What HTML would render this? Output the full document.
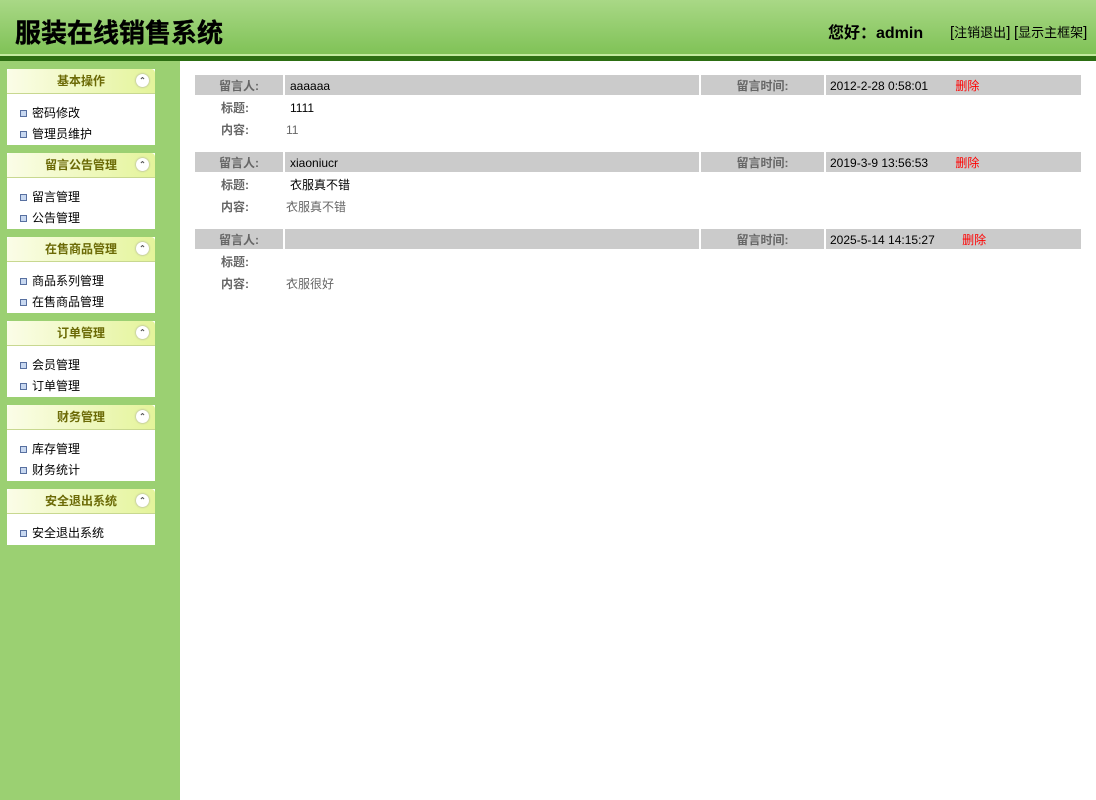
<!DOCTYPE html>
<html><head><meta charset="utf-8"><style>
*{margin:0;padding:0;box-sizing:border-box}
body{width:1096px;height:800px;overflow:hidden;background:#9bd072;font-family:"Liberation Sans","Microsoft YaHei","Noto Sans CJK SC",sans-serif;font-size:12px;position:relative}
#hd{position:absolute;left:0;top:0;width:1096px;height:55px;background:linear-gradient(#a9d886,#7fc256);}
#hd .line{position:absolute;left:0;top:54px;width:100%;height:2px;background:#c2ea9e}
#bar{position:absolute;left:0;top:56px;width:1096px;height:5px;background:#2c6e12}
#title{position:absolute;left:15px;top:15px;font-size:26px;font-weight:bold;color:#000;font-family:"Noto Sans CJK SC",sans-serif;line-height:34px;-webkit-text-stroke:0.4px #000}
#hi{position:absolute;left:828px;top:19px;font-size:16px;font-weight:bold;font-family:"Liberation Sans","Noto Sans CJK SC",sans-serif}
#lk{position:absolute;left:950px;top:22px;font-size:13px;font-family:"Liberation Sans","Noto Sans CJK SC",sans-serif}
#lk b{font-weight:normal;font-size:15px}
#main{position:absolute;left:180px;top:61px;width:916px;height:739px;background:#fff}
.pn{position:absolute;left:7px;width:148px;background:#fff}
.ph{height:25px;background:linear-gradient(90deg,#fbfde8,#e4f49a);border-radius:4px 4px 0 0;border-bottom:1px solid #c8d890;text-align:center;line-height:24px;font-weight:bold;color:#6b6a06;font-size:12px;font-family:"Noto Sans CJK SC",sans-serif;position:relative}
.ph i{position:absolute;right:6px;top:5px;width:13px;height:13px;border-radius:50%;background:#fff;box-shadow:0 0 2px #999;font-style:normal;font-size:8px;line-height:13px;color:#555}
.it{height:21px;line-height:21px;padding-left:25px;position:relative;color:#000;font-family:"Noto Sans CJK SC",sans-serif}
.it:before{content:"";position:absolute;left:13px;top:8px;width:5px;height:5px;border:1px solid #5870a0;background:#c8d8f0}
.row{position:absolute;left:195px;height:20px;width:886px}
.c{position:absolute;top:0;height:20px;background:#cbcbcb;line-height:22px;font-family:"Liberation Sans","Noto Sans CJK SC",sans-serif}
.lab{color:#666;font-weight:bold;text-align:center}
.t{position:absolute;line-height:16px;font-family:"Liberation Sans","Noto Sans CJK SC",sans-serif}
.del{color:#f00}
</style></head><body>
<div id="hd"><div class="line"></div></div><div id="bar"></div>
<div id="title">服装在线销售系统</div>
<div id="hi">您好：admin</div>
<div id="lk"><b>[</b>注销退出<b>]</b> <b>[</b>显示主框架<b>]</b></div>
<div id="main"></div>

<div class="pn" style="top:69px"><div class="ph">基本操作<i>⌃</i></div><div style="padding:8px 0 1px"><div class="it">密码修改</div><div class="it">管理员维护</div></div></div>
<div class="pn" style="top:153px"><div class="ph">留言公告管理<i>⌃</i></div><div style="padding:8px 0 1px"><div class="it">留言管理</div><div class="it">公告管理</div></div></div>
<div class="pn" style="top:237px"><div class="ph">在售商品管理<i>⌃</i></div><div style="padding:8px 0 1px"><div class="it">商品系列管理</div><div class="it">在售商品管理</div></div></div>
<div class="pn" style="top:321px"><div class="ph">订单管理<i>⌃</i></div><div style="padding:8px 0 1px"><div class="it">会员管理</div><div class="it">订单管理</div></div></div>
<div class="pn" style="top:405px"><div class="ph">财务管理<i>⌃</i></div><div style="padding:8px 0 1px"><div class="it">库存管理</div><div class="it">财务统计</div></div></div>
<div class="pn" style="top:489px"><div class="ph">安全退出系统<i>⌃</i></div><div style="padding:8px 0 2px"><div class="it">安全退出系统</div></div></div>

<div class="row" style="top:75px">
<div class="c lab" style="left:0;width:88px">留言人:</div>
<div class="c" style="left:90px;width:414px;padding-left:5px">aaaaaa</div>
<div class="c lab" style="left:506px;width:123px">留言时间:</div>
<div class="c" style="left:631px;width:255px;padding-left:4px">2012-2-28 0:58:01 <span class="del" style="margin-left:24px">删除</span></div>
</div>
<div class="t" style="left:221px;top:100px;color:#666;font-weight:bold">标题:</div><div class="t" style="left:290px;top:100px">1111</div>
<div class="t" style="left:221px;top:122px;color:#666;font-weight:bold">内容:</div><div class="t" style="left:286px;top:122px;color:#666">11</div>

<div class="row" style="top:152px">
<div class="c lab" style="left:0;width:88px">留言人:</div>
<div class="c" style="left:90px;width:414px;padding-left:5px">xiaoniucr</div>
<div class="c lab" style="left:506px;width:123px">留言时间:</div>
<div class="c" style="left:631px;width:255px;padding-left:4px">2019-3-9 13:56:53 <span class="del" style="margin-left:24px">删除</span></div>
</div>
<div class="t" style="left:221px;top:177px;color:#666;font-weight:bold">标题:</div><div class="t" style="left:290px;top:177px">衣服真不错</div>
<div class="t" style="left:221px;top:199px;color:#666;font-weight:bold">内容:</div><div class="t" style="left:286px;top:199px;color:#666">衣服真不错</div>

<div class="row" style="top:229px">
<div class="c lab" style="left:0;width:88px">留言人:</div>
<div class="c" style="left:90px;width:414px"></div>
<div class="c lab" style="left:506px;width:123px">留言时间:</div>
<div class="c" style="left:631px;width:255px;padding-left:4px">2025-5-14 14:15:27 <span class="del" style="margin-left:24px">删除</span></div>
</div>
<div class="t" style="left:221px;top:254px;color:#666;font-weight:bold">标题:</div>
<div class="t" style="left:221px;top:276px;color:#666;font-weight:bold">内容:</div><div class="t" style="left:286px;top:276px;color:#666">衣服很好</div>
</body></html>
